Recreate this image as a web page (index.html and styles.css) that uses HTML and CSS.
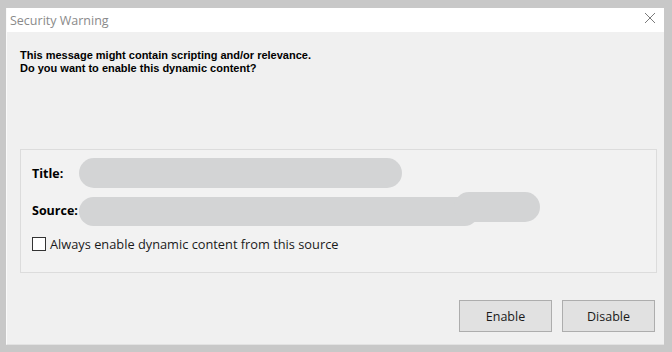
FILE: index.html
```html
<!DOCTYPE html>
<html lang="en">
<head>
    <meta charset="UTF-8">
    <title>Security Warning</title>
    <link rel="stylesheet" href="styles.css">
</head>
<body>
    <div class="dialog">
        <div class="title-bar">
            <span class="title-text">Security Warning</span>
            <svg class="close-icon" width="12" height="12" viewBox="0 0 12 12">
                <path d="M1 1 L11 11 M11 1 L1 11" stroke="#7a7a7a" stroke-width="1" fill="none"/>
            </svg>
        </div>
        <div class="dialog-body">
            <p class="message">This message might contain scripting and/or relevance.<br>Do you want to enable this dynamic content?</p>
            <div class="group-box">
                <div class="field-row">
                    <span class="field-label">Title:</span>
                    <span class="redact redact-title"></span>
                </div>
                <div class="field-row">
                    <span class="field-label">Source:</span>
                    <span class="redact-wrap">
                        <span class="redact redact-source"></span>
                        <span class="redact redact-source-end"></span>
                    </span>
                </div>
                <label class="check-row">
                    <span class="checkbox"></span>
                    Always enable dynamic content from this source
                </label>
            </div>
            <div class="button-row">
                <button class="btn">Enable</button>
                <button class="btn">Disable</button>
            </div>
        </div>
    </div>
</body>
</html>
```

FILE: styles.css
```css
body {
    margin: 0;
    padding: 8px 8px 7px 6px;
    background: #c8c8c8;
    font-family: 'Open Sans', 'Noto Sans', sans-serif;
    color: #000;
}

.dialog {
    height: 337px;
    background: #f0f0f0;
    border-left: 1px solid #fafafa;
    border-bottom: 1px solid #e2e2e2;
    box-sizing: border-box;
    display: flex;
    flex-direction: column;
}

.title-bar {
    height: 24px;
    background: #ffffff;
    display: flex;
    align-items: center;
    justify-content: space-between;
    padding: 0 8px 0 3px;
}

.title-text {
    font-size: 12.5px;
    color: #8a8a8a;
}

.close-icon {
    margin-top: -4px;
}

.dialog-body {
    flex: 1;
    display: flex;
    flex-direction: column;
    padding: 0 7px 12px 13px;
}

.message {
    margin: 17px 0 0 0;
    font-family: 'Liberation Sans', Arial, sans-serif;
    font-weight: bold;
    font-size: 11px;
    line-height: 13px;
}

.group-box {
    margin-top: 74px;
    height: 124px;
    box-sizing: border-box;
    border: 1px solid #dcdcdc;
    background: #f2f2f2;
    padding: 7px 11px 0 11px;
}

.field-row {
    display: flex;
    align-items: center;
    height: 32px;
    margin-bottom: 5px;
}

.field-label {
    font-weight: bold;
    font-size: 12.5px;
    width: 47px;
    flex: none;
}

.redact {
    display: block;
    background: #d3d4d5;
    border-radius: 15px;
}

.redact-title {
    width: 323px;
    height: 30px;
}

.redact-wrap {
    position: relative;
    display: block;
    width: 460px;
    height: 32px;
}

.redact-source {
    position: absolute;
    left: 0;
    top: 3px;
    width: 400px;
    height: 29px;
}

.redact-source-end {
    position: absolute;
    left: 375px;
    top: -2px;
    width: 86px;
    height: 30px;
}

.check-row {
    display: flex;
    align-items: center;
    gap: 4px;
    margin-top: 9px;
    font-size: 12.8px;
    color: #1a1a1a;
}

.checkbox {
    width: 12px;
    height: 12px;
    border: 1px solid #333;
    background: #fff;
    display: inline-block;
}

.button-row {
    margin-top: auto;
    display: flex;
    justify-content: flex-end;
    gap: 10px;
    padding-right: 2px;
}

.btn {
    width: 93px;
    height: 32px;
    background: #e1e1e1;
    border: 1px solid #adadad;
    font-family: 'Open Sans', 'Noto Sans', sans-serif;
    font-size: 12.5px;
    color: #1a1a1a;
}
```
